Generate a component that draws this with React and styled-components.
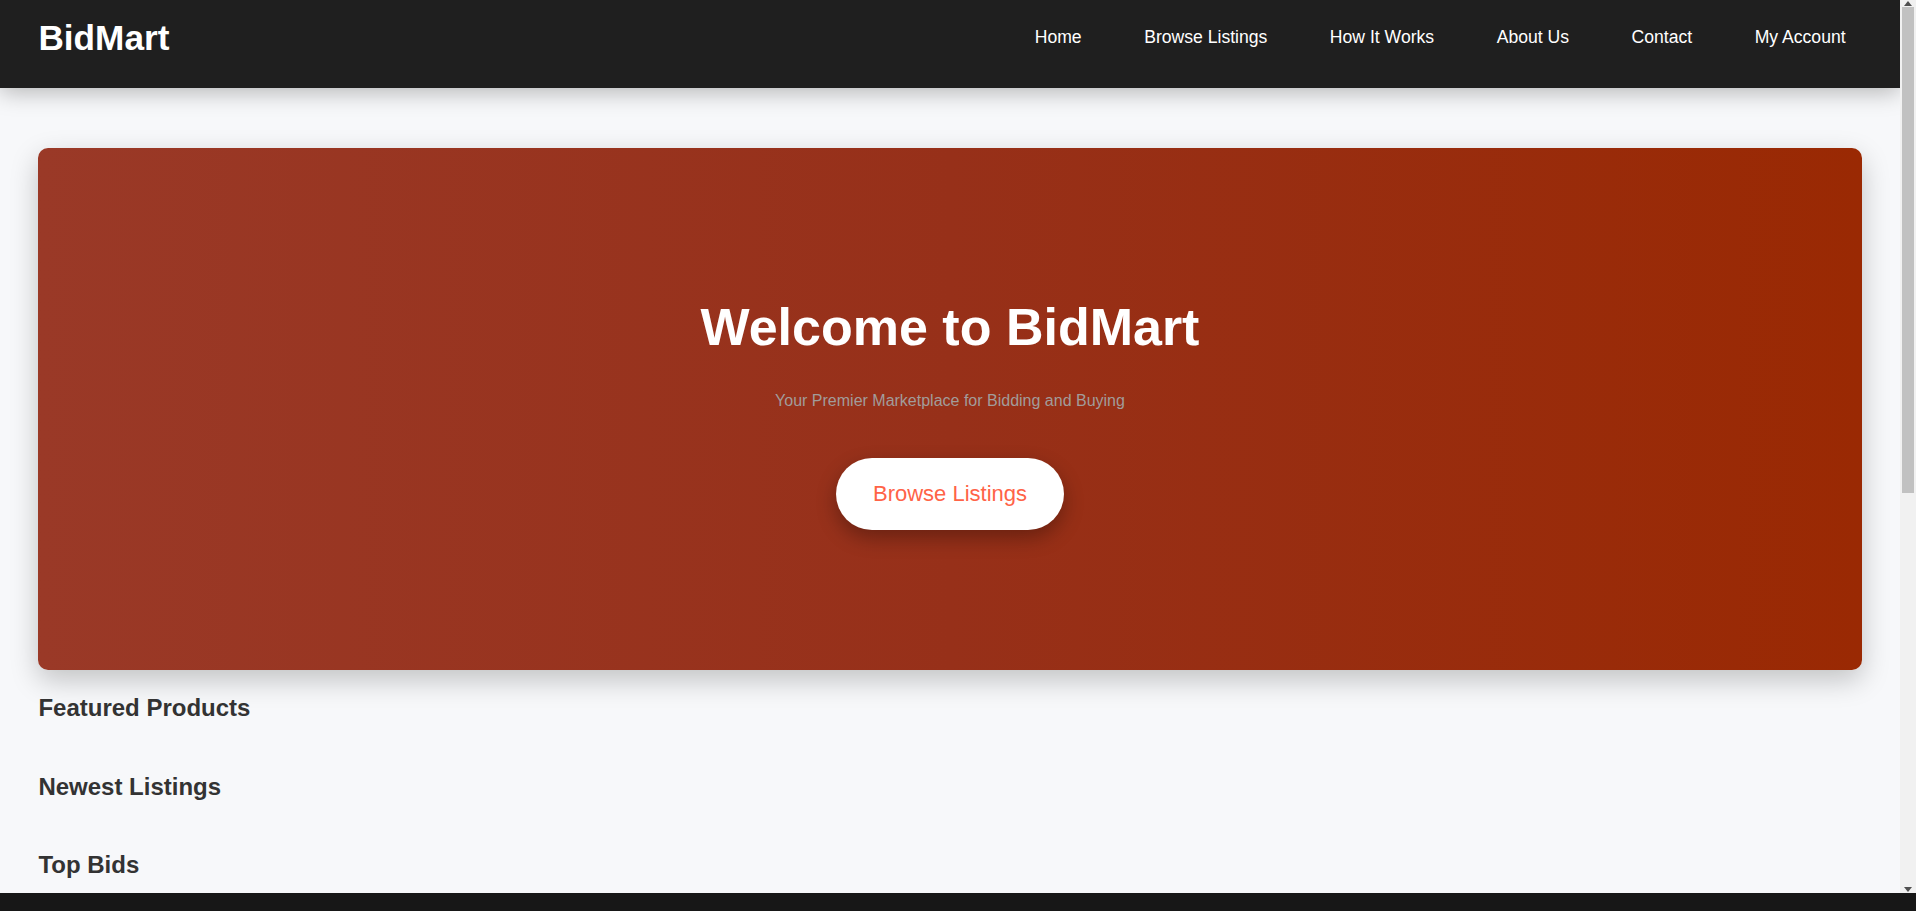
import React from "react";
import styled, { createGlobalStyle } from "styled-components";

const GlobalStyle = createGlobalStyle`
  html, body {
    margin: 0;
    height: 100%;
    overflow: hidden;
  }
  body {
    font-family: "Liberation Sans", Arial, Helvetica, sans-serif;
  }
  #root {
    height: 100%;
  }
  * {
    box-sizing: border-box;
  }
`;

const Shell = styled.div`
  display: flex;
  flex-direction: column;
  height: 100vh;
`;

const Viewport = styled.div`
  flex: 1;
  min-height: 0;
  display: flex;
`;

const Page = styled.div`
  flex: 1;
  min-width: 0;
  overflow-y: auto;
  background: #f7f8fa;
  scrollbar-width: none;
  &::-webkit-scrollbar {
    display: none;
  }
`;

const ScrollRail = styled.div`
  flex-shrink: 0;
  width: 16px;
  display: flex;
  flex-direction: column;
  background: #f1f1f1;
`;

const ScrollButton = styled.div`
  height: 7px;
  display: flex;
  align-items: center;
  justify-content: center;
  flex-shrink: 0;
`;

const ScrollThumb = styled.div`
  height: 486px;
  margin: 0 2px;
  background: #c1c1c1;
`;

const ScrollSpacer = styled.div`
  flex: 1;
`;

const BottomStrip = styled.div`
  flex-shrink: 0;
  height: 18px;
  background: #171717;
`;

const Header = styled.header`
  position: relative;
  z-index: 2;
  height: 88px;
  padding: 0 38.4px 13px;
  display: flex;
  align-items: center;
  justify-content: space-between;
  background: #1f1f1f;
  box-shadow: 0 4px 22px rgba(0, 0, 0, 0.28);
`;

const Logo = styled.div`
  color: #ffffff;
  font-size: 35.2px;
  font-weight: 700;
  line-height: normal;
`;

const Nav = styled.nav`
  display: flex;
  align-items: center;
  gap: 30.5px;
`;

const NavLink = styled.a`
  color: #ffffff;
  font-size: 17.6px;
  text-decoration: none;
  padding: 8px 16px;
  line-height: normal;
  cursor: pointer;
`;

const Main = styled.main`
  padding: 60px 38.4px 0;
`;

const Hero = styled.section`
  display: flex;
  flex-direction: column;
  align-items: center;
  text-align: center;
  padding: 149px 24px 140px;
  border-radius: 10px;
  background: linear-gradient(to right, #9a3927 0%, #973019 50%, #9a2903 100%);
  box-shadow: 0 10px 28px rgba(0, 0, 0, 0.22);
  margin-bottom: 23.8px;
`;

const HeroTitle = styled.h1`
  margin: 0 0 35px;
  color: #ffffff;
  font-size: 52px;
  font-weight: 700;
  line-height: normal;
`;

const HeroSubtitle = styled.p`
  margin: 0 0 48px;
  color: #a29c9a;
  font-size: 16px;
  line-height: normal;
`;

const HeroButton = styled.button`
  border: none;
  background: #ffffff;
  color: #ff6347;
  font-family: inherit;
  font-size: 22px;
  line-height: normal;
  padding: 23px 36.5px;
  border-radius: 40px;
  box-shadow: 0 8px 20px rgba(0, 0, 0, 0.3);
  cursor: pointer;
`;

const Section = styled.section`
  margin-bottom: 50.8px;
`;

const SectionTitle = styled.h2`
  margin: 0;
  color: #333333;
  font-size: 24px;
  font-weight: 700;
  line-height: normal;
`;

const Arrow = ({ down }) => (
  <svg width="8" height="5" viewBox="0 0 8 5">
    <polygon points={down ? "0,0 8,0 4,5" : "0,5 8,5 4,0"} fill="#505050" />
  </svg>
);

const navItems = ["Home", "Browse Listings", "How It Works", "About Us", "Contact", "My Account"];
const sections = ["Featured Products", "Newest Listings", "Top Bids"];

export default function App() {
  return (
    <>
      <GlobalStyle />
      <Shell>
        <Viewport>
          <Page>
            <Header>
              <Logo>BidMart</Logo>
              <Nav>
                {navItems.map((item) => (
                  <NavLink key={item}>{item}</NavLink>
                ))}
              </Nav>
            </Header>
            <Main>
              <Hero>
                <HeroTitle>Welcome to BidMart</HeroTitle>
                <HeroSubtitle>Your Premier Marketplace for Bidding and Buying</HeroSubtitle>
                <HeroButton>Browse Listings</HeroButton>
              </Hero>
              {sections.map((s) => (
                <Section key={s}>
                  <SectionTitle>{s}</SectionTitle>
                </Section>
              ))}
            </Main>
          </Page>
          <ScrollRail>
            <ScrollButton>
              <Arrow />
            </ScrollButton>
            <ScrollThumb />
            <ScrollSpacer />
            <ScrollButton>
              <Arrow down />
            </ScrollButton>
          </ScrollRail>
        </Viewport>
        <BottomStrip />
      </Shell>
    </>
  );
}
